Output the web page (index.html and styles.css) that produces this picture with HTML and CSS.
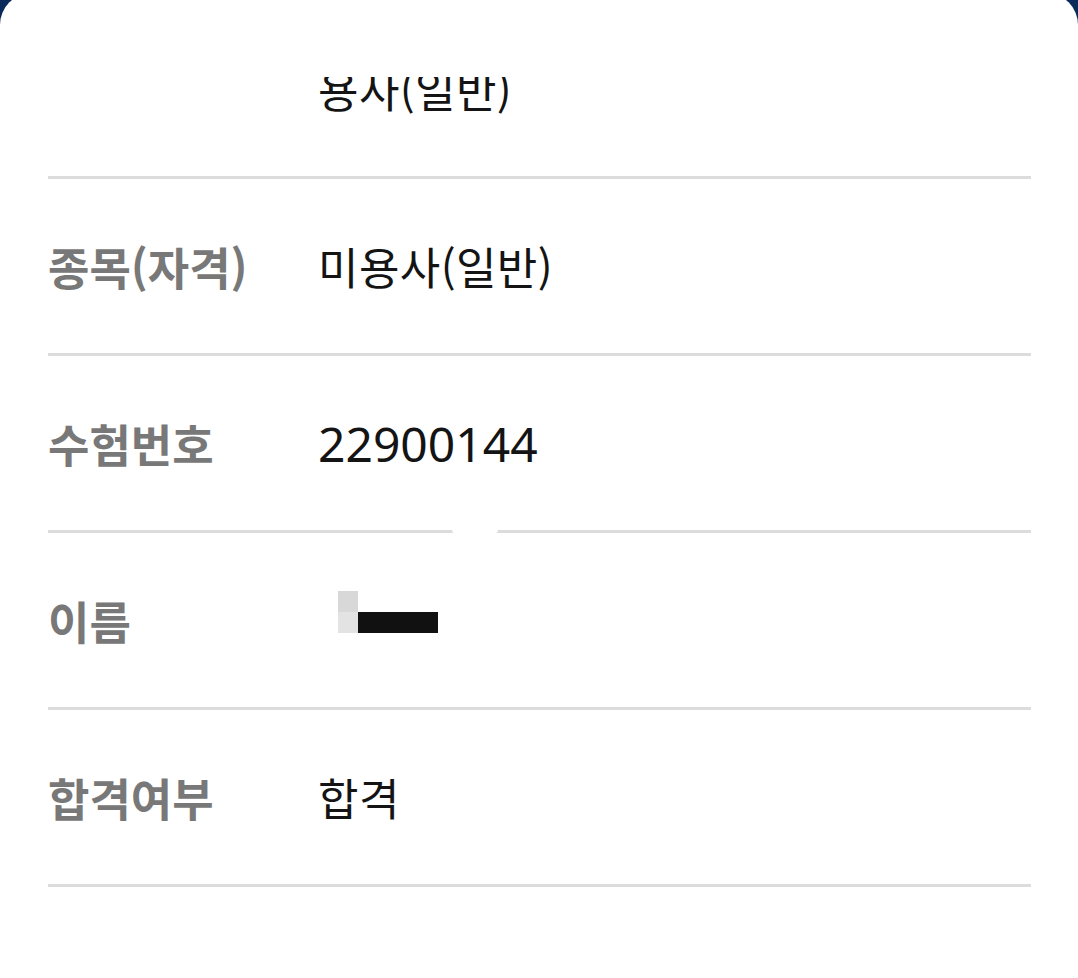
FILE: index.html
```html
<!DOCTYPE html>
<html lang="ko">
<head>
<meta charset="utf-8">
<link rel="stylesheet" href="styles.css">
</head>
<body>
<div class="sheet">
  <div class="viewport">
    <div class="list">
      <div class="row">
        <div class="label"></div>
        <div class="value">용사(일반)</div>
      </div>
      <div class="row">
        <div class="label">종목(자격)</div>
        <div class="value">미용사(일반)</div>
      </div>
      <div class="row notched">
        <div class="label">수험번호</div>
        <div class="value num">22900144</div>
        <span class="notch"></span>
      </div>
      <div class="row">
        <div class="label">이름</div>
        <div class="value">
          <div class="redact">
            <span class="px-a"></span>
            <span class="px-b"></span>
            <span class="px-c"></span>
          </div>
        </div>
      </div>
      <div class="row">
        <div class="label">합격여부</div>
        <div class="value">합격</div>
      </div>
    </div>
  </div>
</div>
</body>
</html>
```

FILE: styles.css
```css
html, body {
  margin: 0;
  padding: 0;
  background: #0b2a5c;
  height: 100%;
  overflow: hidden;
}

.sheet {
  margin-top: -7px;
  height: 1000px;
  background: #ffffff;
  border-radius: 32px 32px 0 0;
  padding-top: 84px;
  box-sizing: border-box;
}

.viewport {
  overflow: hidden;
  height: 916px;
}

.list {
  margin-top: -75px;
  padding: 0 47px 0 48px;
}

.row {
  position: relative;
  display: flex;
  align-items: center;
  height: 174px;
  border-bottom: 3px solid #dcdcdc;
}

.label {
  width: 270px;
  flex: none;
  font-family: "Noto Sans CJK KR", sans-serif;
  font-weight: 700;
  font-size: 45px;
  color: #787878;
}

.value {
  font-family: "Noto Sans CJK KR", sans-serif;
  font-weight: 400;
  font-size: 44px;
  letter-spacing: 0.4px;
  color: #141414;
}

.value.num {
  font-family: "Noto Sans", "Noto Sans CJK KR", sans-serif;
  font-size: 48px;
  letter-spacing: 0;
}

.notch {
  position: absolute;
  left: 404px;
  bottom: -6px;
  width: 46px;
  height: 10px;
  background: #ffffff;
  border-radius: 50%;
}

.redact {
  position: relative;
  width: 120px;
  height: 42px;
  margin-left: 20px;
  margin-top: -16px;
}

.redact span {
  position: absolute;
  display: block;
}

.px-a {
  left: 0;
  top: 0;
  width: 20px;
  height: 21px;
  background: #d8d8d8;
}

.px-b {
  left: 0;
  top: 21px;
  width: 20px;
  height: 21px;
  background: #e3e3e3;
}

.px-c {
  left: 20px;
  top: 21px;
  width: 80px;
  height: 21px;
  background: #111111;
}
```
